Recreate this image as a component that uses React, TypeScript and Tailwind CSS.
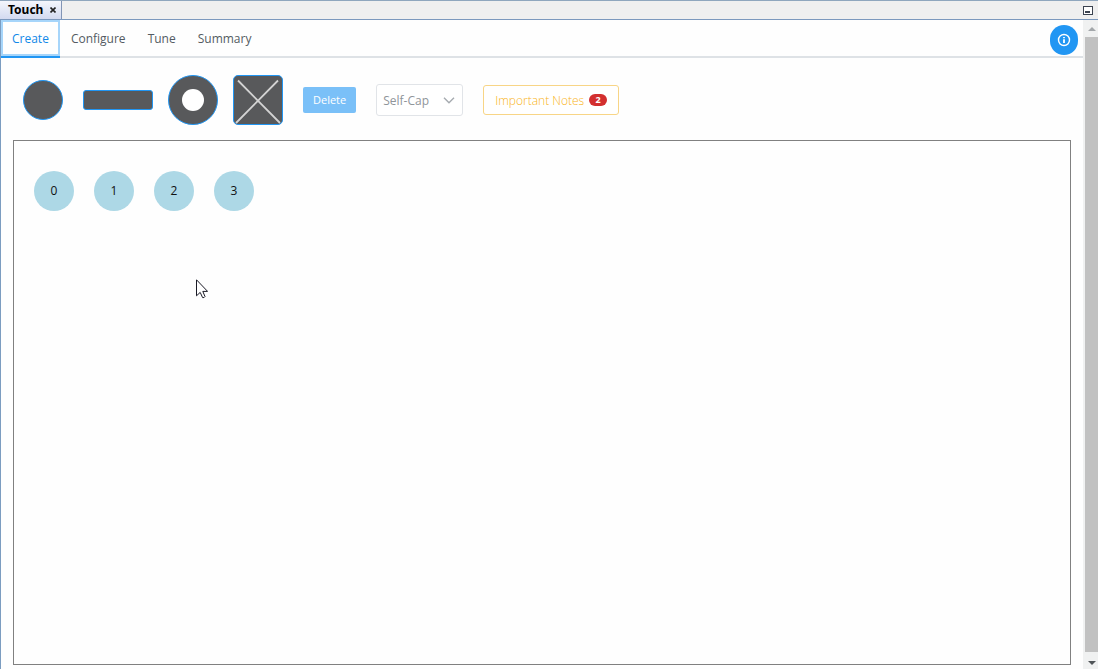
import React, { useState } from 'react';

const TABS = ['Create', 'Configure', 'Tune', 'Summary'];

const SENSORS = [0, 1, 2, 3];

function TitleBar() {
  return (
    <div className="flex h-5 flex-shrink-0 items-stretch justify-between border-t border-b border-t-[#8fa6bd] border-b-[#7b98bd] bg-[#efefef]">
      <div className="flex items-center gap-1.5 border-r border-[#8295b5] bg-linear-to-b from-[#f4f6fc] to-[#d3daf0] pr-1 pl-2">
        <span className="font-['Noto_Sans',sans-serif] text-[12px] leading-4 font-bold text-black">Touch</span>
        <button title="Close" className="flex h-4 w-2 items-center justify-center">
          <svg viewBox="0 0 6 6" className="h-1.5 w-1.5" stroke="#222" strokeWidth="1.6">
            <path d="M0.5 0.5 5.5 5.5M5.5 0.5 0.5 5.5" />
          </svg>
        </button>
      </div>
      <button title="Minimize" className="flex items-center pr-[5px]">
        <svg viewBox="0 0 10 9" className="h-[9px] w-2.5" shapeRendering="crispEdges">
          <rect x="0" y="0" width="10" height="9" fill="#3c4350" />
          <rect x="1" y="1" width="8" height="7" fill="#fff" />
          <rect x="2" y="5" width="5" height="2" fill="#3c4350" />
        </svg>
      </button>
    </div>
  );
}

function ScrollBar() {
  return (
    <div className="flex w-[15px] flex-shrink-0 flex-col bg-[#f0f1f1] pl-0.5">
      <div className="flex h-[17px] items-center justify-center">
        <svg viewBox="0 0 8 4" className="h-1 w-2" fill="#a3a7aa">
          <path d="M0 4 4 0 8 4Z" />
        </svg>
      </div>
      <div className="flex-1 bg-[#c1c1c1]" />
      <div className="flex h-[17px] items-end justify-center pb-1">
        <svg viewBox="0 0 8 4" className="h-1 w-2" fill="#505558">
          <path d="M0 0 4 4 8 0Z" />
        </svg>
      </div>
    </div>
  );
}

export default function App() {
  const [activeTab, setActiveTab] = useState('Create');
  const [mode, setMode] = useState('Self-Cap');

  return (
    <div className="flex h-screen flex-col bg-[#fefefe] font-['Open_Sans','Noto_Sans',sans-serif]">
      <TitleBar />

      <div className="flex min-h-0 flex-1 border-l border-[#7b9cc0]">
        <div className="flex min-w-0 flex-1 flex-col">
          {/* Tabs */}
          <div className="relative flex h-[38px] flex-shrink-0 border-b-2 border-[#dee2e6]">
            {TABS.map(tab => (
              <button
                key={tab}
                onClick={() => setActiveTab(tab)}
                className={`-mb-0.5 border-b-2 px-[11px] pt-0.5 text-[12px] leading-4 ${
                  activeTab === tab
                    ? 'border-[#2196f3] text-[#1088e8] inset-ring-2 inset-ring-[#a6d5fa]'
                    : 'border-transparent text-[#535b62]'
                }`}
              >
                {tab}
              </button>
            ))}
            <button
              title="Information"
              className="absolute top-[5px] right-[5px] flex h-[30px] w-7 items-center justify-center rounded-full bg-[#2196f3]"
            >
              <svg viewBox="0 0 14 14" className="h-3.5 w-3.5" fill="none" stroke="#fff">
                <circle cx="7" cy="7" r="5.5" strokeWidth="1.4" />
                <path d="M7 6.2V10M7 4V5.2" strokeWidth="1.8" />
              </svg>
            </button>
          </div>

          {/* Toolbar */}
          <div className="flex h-[82px] flex-shrink-0 items-center gap-5 pt-0.5 pl-[22px]">
            <button title="Button" className="h-10 w-10 rounded-full border border-[#2196f3] bg-[#58595b]" />
            <div className="flex items-center gap-[15px]">
              <button title="Slider" className="h-5 w-[70px] rounded-[3px] border border-[#2196f3] bg-[#58595b]" />
              <button
                title="Wheel"
                className="flex h-[50px] w-[50px] items-center justify-center rounded-full border border-[#2196f3] bg-[#58595b]"
              >
                <span className="h-[22px] w-[22px] rounded-full bg-white" />
              </button>
              <button title="Surface" className="h-[50px] w-[50px] rounded-[5px] border border-[#2196f3] bg-[#58595b]">
                <svg viewBox="0 0 48 48" className="h-12 w-12" stroke="#d3d3d3" strokeWidth="1.8">
                  <path d="M4 4.5 46 47M44 4.5 2 47" />
                </svg>
              </button>
            </div>

            <button
              disabled
              className="h-[26px] rounded-[2px] bg-[#7ac0f8] px-2.5 text-[11px] leading-4 text-white"
            >
              Delete
            </button>

            <div className="relative flex">
              <select
                aria-label="Sensing mode"
                value={mode}
                onChange={e => setMode(e.target.value)}
                className="h-8 w-[87px] appearance-none rounded-[3px] border border-[#e1e4e8] bg-white pt-0.5 pl-1.5 text-[12px] leading-4 text-[#8f959a]"
              >
                <option>Self-Cap</option>
                <option>Mutual-Cap</option>
              </select>
              <svg
                viewBox="0 0 12 7"
                className="pointer-events-none absolute top-[13px] right-2 h-[7px] w-3"
                fill="none"
                stroke="#a6abb0"
                strokeWidth="1.4"
              >
                <path d="M1 0.8 6 5.8 11 0.8" />
              </svg>
            </div>

            <button className="flex h-[30px] items-center gap-[5px] rounded-[3px] border border-[#f8d586] bg-white px-[11px] text-[12px] leading-4 text-[#f9b418]">
              <span className="pt-0.5 font-light">Important Notes</span>
              <span className="flex h-3 w-[18px] items-center justify-center rounded-full bg-[#d32f2f] text-[9px] leading-3 font-bold text-white">
                2
              </span>
            </button>
          </div>

          {/* Sensor canvas */}
          <div className="mr-3 mb-1 ml-3 flex flex-1 items-start gap-5 border border-[#808080] px-5 pt-[30px]">
            {SENSORS.map(id => (
              <div
                key={id}
                className="flex h-10 w-10 items-center justify-center rounded-full bg-[#add8e6] text-[12px] leading-4 text-[#111]"
              >
                {id}
              </div>
            ))}
          </div>
        </div>

        <ScrollBar />
      </div>

      {/* Mouse pointer */}
      <svg viewBox="0 0 12 20" className="pointer-events-none absolute top-[279px] left-[196px] h-5 w-3" fill="#fff" stroke="#1a1a26">
        <path d="M0.5 0.8V16.8L4.2 13.4 6.6 18.6Q8.3 19 9 17.6L6.8 12.4H11.6Z" />
      </svg>
    </div>
  );
}
